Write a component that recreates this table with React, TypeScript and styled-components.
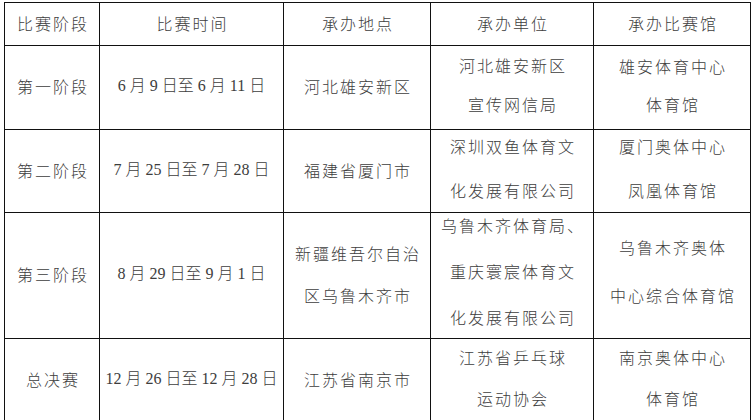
import { createGlobalStyle } from "styled-components";
import styled from "styled-components";

const GlobalStyle = createGlobalStyle`
    html, body {
        margin: 0;
        padding: 0;
        background: #ffffff;
    }
`;

const Page = styled.div`
    width: 754px;
    height: 420px;
    overflow: hidden;
    padding: 2px 0 0 4px;
    box-sizing: border-box;
    background: #ffffff;
`;

const Table = styled.div`
    display: grid;
    grid-template-columns: 95px 184px 147px 163px 157px;
    grid-template-rows: 43px 84px 83px 126px 84px;
    border-top: 1px solid #111;
    border-left: 1px solid #111;
    width: max-content;
`;

const Cell = styled.div<{ $lh: number; $date?: boolean; $up?: number }>`
    box-sizing: border-box;
    border-right: 1px solid #111;
    border-bottom: 1px solid #111;
    display: flex;
    flex-direction: column;
    align-items: center;
    justify-content: center;
    overflow: visible;
    white-space: nowrap;
    font-family: ${ p => p.$date ? '"Liberation Serif", "Noto Sans CJK SC", serif' : '"Noto Sans CJK SC", sans-serif' };
    font-size: 16px;
    font-weight: 300;
    color: #3d3d3d;
    line-height: ${ p => p.$lh }px;
    letter-spacing: ${ p => p.$date ? 0 : 2 }px;
    padding-left: ${ p => p.$date ? 0 : 2 }px;
    padding-bottom: ${ p => p.$up ?? 3 }px;
`;

const Line = styled.span`
    display: block;
`;

interface CellData {
    lines: string[];
    lh?: number;
    date?: boolean;
    up?: number;
};

const header = ['比赛阶段', '比赛时间', '承办地点', '承办单位', '承办比赛馆'];

const rows: CellData[][] = [
    [
        { lines: ['第一阶段'] },
        { lines: ['6 月 9 日至 6 月 11 日'], date: true },
        { lines: ['河北雄安新区'] },
        { lines: ['河北雄安新区', '宣传网信局'], lh: 39, up: 6 },
        { lines: ['雄安体育中心', '体育馆'], lh: 38, up: 6 },
    ],
    [
        { lines: ['第二阶段'] },
        { lines: ['7 月 25 日至 7 月 28 日'], date: true },
        { lines: ['福建省厦门市'] },
        { lines: ['深圳双鱼体育文', '化发展有限公司'], lh: 44, up: 6 },
        { lines: ['厦门奥体中心', '凤凰体育馆'], lh: 44, up: 6 },
    ],
    [
        { lines: ['第三阶段'] },
        { lines: ['8 月 29 日至 9 月 1 日'], date: true },
        { lines: ['新疆维吾尔自治', '区乌鲁木齐市'], lh: 42, up: 4 },
        { lines: ['乌鲁木齐体育局、', '重庆寰宸体育文', '化发展有限公司'], lh: 46, up: 9 },
        { lines: ['乌鲁木齐奥体', '中心综合体育馆'], lh: 48, up: 9 },
    ],
    [
        { lines: ['总决赛'] },
        { lines: ['12 月 26 日至 12 月 28 日'], date: true },
        { lines: ['江苏省南京市'] },
        { lines: ['江苏省乒乓球', '运动协会'], lh: 41, up: 5 },
        { lines: ['南京奥体中心', '体育馆'], lh: 41, up: 6 },
    ],
];

function App() {
    return (
        <>
            <GlobalStyle />
            <Page>
                <Table>
                    {header.map((h, i) => (
                        <Cell key={`h${i}`} $lh={24}>
                            <Line>{h}</Line>
                        </Cell>
                    ))}
                    {rows.map((row, r) =>
                        row.map((cell, c) => (
                            <Cell key={`${r}-${c}`} $lh={cell.lh ?? 24} $date={cell.date} $up={cell.up}>
                                {cell.lines.map((l, k) => <Line key={k}>{l}</Line>)}
                            </Cell>
                        ))
                    )}
                </Table>
            </Page>
        </>
    )
}

export default App;
